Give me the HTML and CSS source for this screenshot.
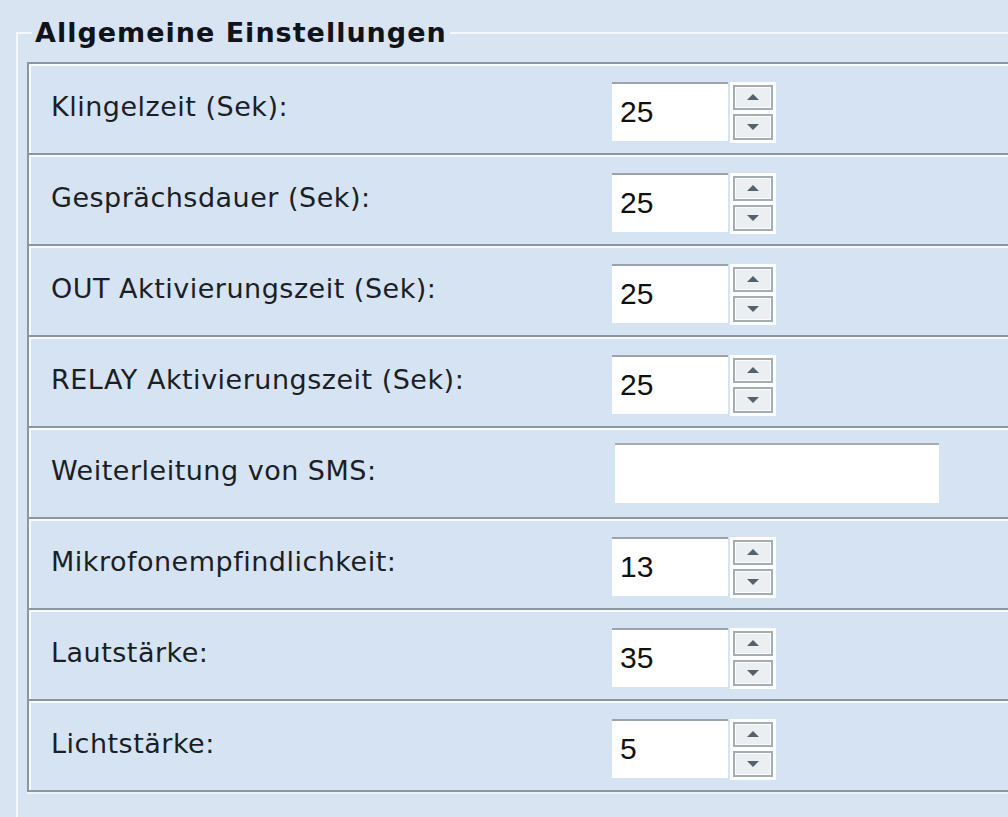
FILE: index.html
```html
<!DOCTYPE html>
<html lang="de">
<head>
<meta charset="utf-8">
<title>Allgemeine Einstellungen</title>
<link rel="stylesheet" href="styles.css">
</head>
<body>
<div class="page">
  <fieldset class="group">
    <legend class="group-title">Allgemeine Einstellungen</legend>
    <div class="box">
      <div class="row">
        <div class="label">Klingelzeit (Sek):</div>
        <div class="spin"><div class="field">25</div><div class="spin-btns"><div class="btn btn-up"><svg width="12" height="6" viewBox="0 0 12 6"><polygon points="6,0 12,6 0,6"/></svg></div><div class="btn btn-down"><svg width="12" height="6" viewBox="0 0 12 6"><polygon points="0,0 12,0 6,6"/></svg></div></div></div>
      </div>
      <div class="row">
        <div class="label">Gesprächsdauer (Sek):</div>
        <div class="spin"><div class="field">25</div><div class="spin-btns"><div class="btn btn-up"><svg width="12" height="6" viewBox="0 0 12 6"><polygon points="6,0 12,6 0,6"/></svg></div><div class="btn btn-down"><svg width="12" height="6" viewBox="0 0 12 6"><polygon points="0,0 12,0 6,6"/></svg></div></div></div>
      </div>
      <div class="row">
        <div class="label">OUT Aktivierungszeit (Sek):</div>
        <div class="spin"><div class="field">25</div><div class="spin-btns"><div class="btn btn-up"><svg width="12" height="6" viewBox="0 0 12 6"><polygon points="6,0 12,6 0,6"/></svg></div><div class="btn btn-down"><svg width="12" height="6" viewBox="0 0 12 6"><polygon points="0,0 12,0 6,6"/></svg></div></div></div>
      </div>
      <div class="row">
        <div class="label">RELAY Aktivierungszeit (Sek):</div>
        <div class="spin"><div class="field">25</div><div class="spin-btns"><div class="btn btn-up"><svg width="12" height="6" viewBox="0 0 12 6"><polygon points="6,0 12,6 0,6"/></svg></div><div class="btn btn-down"><svg width="12" height="6" viewBox="0 0 12 6"><polygon points="0,0 12,0 6,6"/></svg></div></div></div>
      </div>
      <div class="row">
        <div class="label">Weiterleitung von SMS:</div>
        <div class="text-field"></div>
      </div>
      <div class="row">
        <div class="label">Mikrofonempfindlichkeit:</div>
        <div class="spin"><div class="field">13</div><div class="spin-btns"><div class="btn btn-up"><svg width="12" height="6" viewBox="0 0 12 6"><polygon points="6,0 12,6 0,6"/></svg></div><div class="btn btn-down"><svg width="12" height="6" viewBox="0 0 12 6"><polygon points="0,0 12,0 6,6"/></svg></div></div></div>
      </div>
      <div class="row">
        <div class="label">Lautstärke:</div>
        <div class="spin"><div class="field">35</div><div class="spin-btns"><div class="btn btn-up"><svg width="12" height="6" viewBox="0 0 12 6"><polygon points="6,0 12,6 0,6"/></svg></div><div class="btn btn-down"><svg width="12" height="6" viewBox="0 0 12 6"><polygon points="0,0 12,0 6,6"/></svg></div></div></div>
      </div>
      <div class="row">
        <div class="label">Lichtstärke:</div>
        <div class="spin"><div class="field">5</div><div class="spin-btns"><div class="btn btn-up"><svg width="12" height="6" viewBox="0 0 12 6"><polygon points="6,0 12,6 0,6"/></svg></div><div class="btn btn-down"><svg width="12" height="6" viewBox="0 0 12 6"><polygon points="0,0 12,0 6,6"/></svg></div></div></div>
      </div>
    </div>
  </fieldset>
</div>
</body>
</html>
```

FILE: styles.css
```css
html, body {
  margin: 0;
  padding: 0;
  height: 100%;
  overflow: hidden;
}

body {
  background: #d8e4f2;
  font-family: "DejaVu Sans", "Liberation Sans", sans-serif;
  color: #1b1f25;
}

.page {
  padding: 18px 0 0 16px;
  overflow: hidden;
  height: 100%;
  box-sizing: border-box;
}

.group {
  margin: 0 -60px 0 0;
  padding: 14px 0 60px 9px;
  border: 2px solid #f4f9fe;
  min-width: 0;
}

.group-title {
  font-size: 27px;
  font-weight: bold;
  line-height: 30px;
  padding: 0 3px;
  margin-left: 5px;
  letter-spacing: 1px;
  color: #10141a;
}

.box {
  border-left: 2px solid #8a97a2;
  border-bottom: 2px solid #8a97a2;
  box-shadow: 0 2px 0 #eaf2fa;
}

.row {
  height: 91px;
  box-sizing: border-box;
  border-top: 2px solid #8a97a2;
  box-shadow: inset 2px 2px 0 #f7fbff;
  background: #d6e3f2;
  display: flex;
  align-items: center;
  padding-left: 22px;
}

.label {
  flex: 0 0 561px;
  font-size: 27px;
  line-height: 32px;
  letter-spacing: 0.5px;
  margin-bottom: 4px;
  white-space: nowrap;
}

.spin {
  display: flex;
  align-items: stretch;
  height: 61px;
  margin-top: 7px;
}

.field {
  width: 116px;
  height: 59px;
  box-sizing: border-box;
  border-top: 2px solid #9ba4ad;
  background: #ffffff;
  font-family: "Liberation Sans", "DejaVu Sans", sans-serif;
  font-size: 30px;
  line-height: 55px;
  padding-left: 8px;
  color: #111;
}

.spin-btns {
  margin-left: 2px;
  width: 46px;
  box-sizing: border-box;
  background: #ffffff;
  padding: 3px 3px 2px 3px;
  display: flex;
  flex-direction: column;
  gap: 4px;
}

.btn {
  width: 40px;
  box-sizing: border-box;
  border: 2px solid #a5acb2;
  background: #eceff2;
  box-shadow: inset 0 0 0 1px #fbfcfd;
  display: flex;
  align-items: center;
  justify-content: center;
}

.btn-up { height: 25px; }
.btn-down { height: 26px; }

.btn svg {
  display: block;
  fill: #56616e;
}

.text-field {
  margin-left: 3px;
  width: 324px;
  height: 60px;
  box-sizing: border-box;
  border-top: 2px solid #a3acb4;
  background: #ffffff;
}
```
